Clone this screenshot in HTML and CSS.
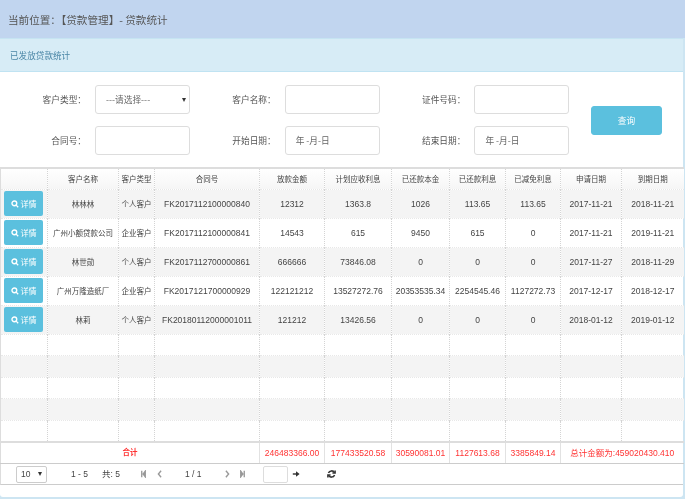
FILE: index.html
```html
<!DOCTYPE html>
<html lang="zh">
<head>
<meta charset="utf-8">
<title>贷款统计</title>
<link rel="stylesheet" href="styles.css">
</head>
<body>
<header class="crumb">当前位置：【贷款管理】- 贷款统计</header>
<main class="panel">
  <div class="panel-title">已发放贷款统计</div>
  <form class="filter">
    <div class="fields">
      <label class="lbl">客户类型：</label>
      <div class="ctl select"><span>---请选择---</span><i class="caret"></i></div>
      <label class="lbl">客户名称：</label>
      <div class="ctl"></div>
      <label class="lbl">证件号码：</label>
      <div class="ctl"></div>
      <label class="lbl">合同号：</label>
      <div class="ctl"></div>
      <label class="lbl">开始日期：</label>
      <div class="ctl date">年 -月-日</div>
      <label class="lbl">结束日期：</label>
      <div class="ctl date">年 -月-日</div>
    </div>
    <button type="button" class="query">查询</button>
  </form>
  <table class="grid">
    <colgroup>
      <col class="c0"><col class="c1"><col class="c2"><col class="c3"><col class="c4"><col class="c5"><col class="c6"><col class="c7"><col class="c8"><col class="c9"><col class="c10">
    </colgroup>
    <thead>
      <tr><th></th><th>客户名称</th><th>客户类型</th><th>合同号</th><th>放款金额</th><th>计划应收利息</th><th>已还款本金</th><th>已还款利息</th><th>已减免利息</th><th>申请日期</th><th>到期日期</th></tr>
    </thead>
    <tbody>
      <tr class="data"><td><a class="detail"><svg class="mag" viewBox="0 0 10 10"><circle cx="4.2" cy="4.2" r="3"/><path d="M6.4 6.4 9 9"/></svg>详情</a></td><td class="zh">林林林</td><td class="zh">个人客户</td><td>FK2017112100000840</td><td>12312</td><td>1363.8</td><td>1026</td><td>113.65</td><td>113.65</td><td>2017-11-21</td><td>2018-11-21</td></tr>
      <tr class="data"><td><a class="detail"><svg class="mag" viewBox="0 0 10 10"><circle cx="4.2" cy="4.2" r="3"/><path d="M6.4 6.4 9 9"/></svg>详情</a></td><td class="zh">广州小额贷款公司</td><td class="zh">企业客户</td><td>FK2017112100000841</td><td>14543</td><td>615</td><td>9450</td><td>615</td><td>0</td><td>2017-11-21</td><td>2019-11-21</td></tr>
      <tr class="data"><td><a class="detail"><svg class="mag" viewBox="0 0 10 10"><circle cx="4.2" cy="4.2" r="3"/><path d="M6.4 6.4 9 9"/></svg>详情</a></td><td class="zh">林世勋</td><td class="zh">个人客户</td><td>FK2017112700000861</td><td>666666</td><td>73846.08</td><td>0</td><td>0</td><td>0</td><td>2017-11-27</td><td>2018-11-29</td></tr>
      <tr class="data"><td><a class="detail"><svg class="mag" viewBox="0 0 10 10"><circle cx="4.2" cy="4.2" r="3"/><path d="M6.4 6.4 9 9"/></svg>详情</a></td><td class="zh">广州万隆造纸厂</td><td class="zh">企业客户</td><td>FK2017121700000929</td><td>122121212</td><td>13527272.76</td><td>20353535.34</td><td>2254545.46</td><td>1127272.73</td><td>2017-12-17</td><td>2018-12-17</td></tr>
      <tr class="data"><td><a class="detail"><svg class="mag" viewBox="0 0 10 10"><circle cx="4.2" cy="4.2" r="3"/><path d="M6.4 6.4 9 9"/></svg>详情</a></td><td class="zh">林莉</td><td class="zh">个人客户</td><td>FK20180112000001011</td><td>121212</td><td>13426.56</td><td>0</td><td>0</td><td>0</td><td>2018-01-12</td><td>2019-01-12</td></tr>
      <tr class="blank"><td></td><td></td><td></td><td></td><td></td><td></td><td></td><td></td><td></td><td></td><td></td></tr>
      <tr class="blank"><td></td><td></td><td></td><td></td><td></td><td></td><td></td><td></td><td></td><td></td><td></td></tr>
      <tr class="blank"><td></td><td></td><td></td><td></td><td></td><td></td><td></td><td></td><td></td><td></td><td></td></tr>
      <tr class="blank"><td></td><td></td><td></td><td></td><td></td><td></td><td></td><td></td><td></td><td></td><td></td></tr>
      <tr class="blank"><td></td><td></td><td></td><td></td><td></td><td></td><td></td><td></td><td></td><td></td><td></td></tr>
    </tbody>
    <tfoot>
      <tr><td colspan="4" class="sum-label">合计</td><td>246483366.00</td><td>177433520.58</td><td>30590081.01</td><td>1127613.68</td><td>3385849.14</td><td colspan="2">总计金额为:459020430.410</td></tr>
    </tfoot>
  </table>
  <nav class="pager">
    <div class="size"><span>10</span><i class="caret"></i></div>
    <span class="range">1 - 5</span>
    <span class="total">共: 5</span>
    <svg class="pg first" viewBox="0 0 6 10"><path d="M.8 1v8M5.2 1.5 2.6 5l2.6 3.5z"/></svg>
    <svg class="pg prev" viewBox="0 0 6 10"><path d="M5 1 1.6 5 5 9"/></svg>
    <span class="pages">1 / 1</span>
    <svg class="pg next" viewBox="0 0 6 10"><path d="M1 1l3.4 4L1 9"/></svg>
    <svg class="pg last" viewBox="0 0 6 10"><path d="M5.2 1v8M.8 1.5 3.4 5 .8 8.5z"/></svg>
    <div class="jump"></div>
    <svg class="go" viewBox="0 0 10 10"><path d="M1 5h6"/><path class="head" d="M5 1.5 9.5 5 5 8.5z"/></svg>
    <svg class="refresh" viewBox="0 0 10 10"><path d="M8.4 3.6A3.7 3.7 0 0 0 1.6 4M1.6 6.4A3.7 3.7 0 0 0 8.4 6"/><path d="M9 1v3H6M1 9V6h3"/></svg>
  </nav>
</main>
</body>
</html>
```
FILE: styles.css
```css
* { box-sizing: border-box; }
html, body { margin: 0; height: 100%; }
html { background: #cde5f2; }
body {
  width: 685px;
  height: 499px;
  overflow: hidden;
  font-family: "Liberation Sans", "Noto Sans CJK SC", sans-serif;
  color: #555;
  filter: blur(0.3px);
}
.crumb {
  height: 38px;
  line-height: 39px;
  padding-left: 8px;
  background: #c1d5ef;
  font-family: "Noto Sans CJK SC", sans-serif;
  font-size: 10.6px;
  color: #555;
}
.panel {
  width: 683px;
  height: 459px;
  background: #fff;
  border-radius: 0 0 3px 3px;
}
.panel-title {
  height: 34px;
  line-height: 33px;
  padding-left: 10px;
  background: #d7ecf6;
  border-top: 1px solid #c6e4f2;
  border-bottom: 1px solid #c0e3f2;
  font-family: "Noto Sans CJK SC", sans-serif;
  font-size: 8.6px;
  color: #4a86a6;
}
.filter {
  display: flex;
  height: 95px;
  padding-top: 13px;
}
.fields {
  display: grid;
  grid-template-columns: 86px 103.7px 86px 103.7px 86px 103.7px;
  grid-template-rows: 29px 29px;
  row-gap: 12px;
  width: 570px;
}
.lbl {
  align-self: center;
  justify-self: end;
  font-family: "Noto Sans CJK SC", sans-serif;
  font-size: 8.7px;
  color: #555;
  white-space: nowrap;
}
.ctl {
  display: flex;
  align-items: center;
  justify-content: space-between;
  width: 95px;
  height: 29px;
  margin-left: 9px;
  border: 1px solid #ddd;
  border-radius: 3px;
  background: #fff;
  font-family: "Noto Sans CJK SC", sans-serif;
  font-size: 8.7px;
  color: #666;
}
.select { padding: 0 3px 0 10px; }
.date { padding-left: 10px; }
.caret {
  width: 0;
  height: 0;
  border-left: 2px solid transparent;
  border-right: 2px solid transparent;
  border-top: 4px solid #333;
}
.query {
  align-self: flex-start;
  width: 71px;
  height: 29px;
  margin: 21px 0 0 21px;
  padding: 0;
  border: 1px solid #5bc0de;
  border-radius: 3px;
  background: #5bc0de;
  color: #fff;
  font-family: "Noto Sans CJK SC", sans-serif;
  font-size: 8.7px;
}
.grid {
  width: 683px;
  table-layout: fixed;
  border-collapse: collapse;
  border-top: 2px solid #ddd;
  font-size: 8.5px;
  line-height: 12px;
  color: #444;
}
.c0 { width: 47px; }
.c1 { width: 71px; }
.c2 { width: 36px; }
.c3 { width: 105px; }
.c4 { width: 65px; }
.c5 { width: 67px; }
.c6 { width: 58px; }
.c7 { width: 56px; }
.c8 { width: 55px; }
.c9 { width: 61px; }
.c10 { width: 62px; }
th, td {
  padding: 0;
  text-align: center;
  font-weight: 400;
  white-space: nowrap;
  overflow: hidden;
  border-left: 1px dotted #d4d4d4;
  border-top: 1px dotted #e8e8e8;
}
th:first-child, td:first-child { border-left: 1px solid #ddd; }
th, .zh {
  font-family: "Noto Sans CJK SC", sans-serif;
  font-size: 7.5px;
}
thead tr { height: 21px; background: linear-gradient(#fff, #f6f6f6); }
thead th { border-top: 0; }
.data { height: 29px; }
.data:nth-child(odd) { background: #f4f4f4; }
.blank { height: 21.6px; }
.blank:nth-child(odd) { background: #f4f4f4; }
tfoot tr { height: 22px; }
tfoot td {
  border-top: 2px solid #ddd;
  border-left: 1px solid #e2e2e2;
  border-bottom: 1px solid #ccc;
  color: #f33;
}
.sum-label {
  font-size: 7.5px;
  font-weight: 700;
}
.detail {
  display: flex;
  align-items: center;
  justify-content: center;
  gap: 2px;
  width: 39px;
  height: 25px;
  margin-left: 3px;
  border-radius: 2px;
  background: #5bc0de;
  color: #fff;
  font-family: "Noto Sans CJK SC", sans-serif;
  font-size: 8px;
}
.mag { width: 8px; height: 8px; fill: none; stroke: #fff; stroke-width: 1.7; }
.pager {
  display: flex;
  align-items: center;
  height: 21px;
  border-bottom: 1px solid #ccc;
  border-left: 1px solid #ddd;
  font-size: 8.5px;
  line-height: 12px;
  color: #444;
}
.size {
  display: flex;
  align-items: center;
  justify-content: space-between;
  width: 31px;
  height: 17px;
  margin-left: 15px;
  padding: 0 4px;
  border: 1px solid #ccc;
  border-radius: 2px;
}
.range { margin-left: 24px; }
.total { margin-left: 14px; }
.pg { width: 5px; height: 8px; fill: none; stroke: #999; stroke-width: 1.7; }
.first { margin-left: 21px; fill: #999; }
.prev { margin-left: 11px; }
.pages { margin-left: 23px; }
.next { margin-left: 23px; }
.last { margin-left: 10px; fill: #999; }
.jump { width: 25px; height: 17px; margin-left: 18px; border: 1px solid #ddd; border-radius: 2px; }
.go { width: 8px; height: 8px; margin-left: 4px; fill: none; stroke: #333; stroke-width: 1.8; }
.head { fill: #333; stroke: none; }
.refresh { width: 9px; height: 10px; margin-left: 27px; fill: none; stroke: #333; stroke-width: 1.7; }
```
